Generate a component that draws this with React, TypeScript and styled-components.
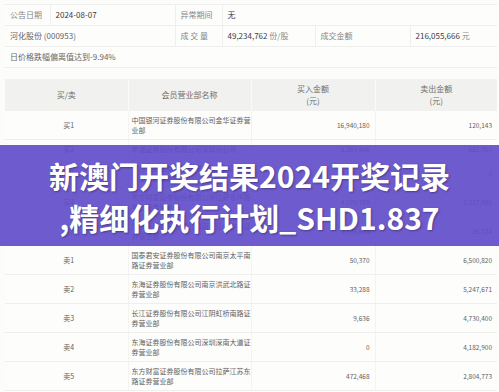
import React from "react";
import styled, { createGlobalStyle } from "styled-components";

const GlobalStyle = createGlobalStyle`
  html, body { margin: 0; padding: 0; background: #fcfcfb; }
  body { font-family: "Noto Sans CJK SC", "Noto Sans", sans-serif; }
`;

const Page = styled.div`
  position: relative;
  width: 499px;
  height: 392px;
  overflow: hidden;
  padding: 4px 2px 0 5px;
  box-sizing: border-box;
  display: flex;
  flex-direction: column;
  gap: 11px;
`;

const InfoTable = styled.table`
  width: 492px;
  table-layout: fixed;
  border-collapse: collapse;
  background: #fdfdfc;
  font-size: 8px;
`;

const InfoCell = styled.td<{ $kind?: "label" | "value" | "muted" }>`
  height: 20px;
  padding: 0 5px;
  border: 1px solid #efefed;
  white-space: nowrap;
  line-height: 10px;
  color: ${(p) => (p.$kind === "value" ? "#3c3c3c" : p.$kind === "muted" ? "#666" : "#858585")};
  &:first-child { border-left: none; }
  &:last-child { border-right: none; }
`;

const Unit = styled.span`
  color: #8a8a8a;
`;

const MainTable = styled.table`
  width: 492px;
  table-layout: fixed;
  border-collapse: collapse;
  background: #fdfdfc;
`;

const HeadCell = styled.th`
  background: #f1f1f0;
  color: #6e6e6e;
  font-weight: 400;
  font-size: 8px;
  line-height: 12px;
  padding: 4px 2px;
  text-align: center;
  border-right: 1px solid #fafafa;
  &:last-child { border-right: none; }
`;

const BodyCell = styled.td<{ $align: "center" | "left" | "right" }>`
  padding: 4px ${(p) => (p.$align === "left" ? "0 4px 3px" : "5px")};
  padding-top: 4px;
  padding-bottom: 4px;
  padding-left: ${(p) => (p.$align === "left" ? "3px" : "5px")};
  padding-right: ${(p) => (p.$align === "right" ? "5px" : "0")};
  text-align: ${(p) => p.$align};
  font-size: ${(p) => (p.$align === "right" ? "6.5px" : "7px")};
  line-height: 10px;
  color: #616161;
  border-bottom: 1px solid #efefed;
  border-right: 1px solid #f3f3f1;
  white-space: nowrap;
  &:last-child { border-right: none; }
`;

const NameLine = styled.div`
  white-space: nowrap;
`;

const Banner = styled.div`
  position: absolute;
  left: 0;
  right: 0;
  top: 145px;
  height: 101px;
  background: rgba(96, 76, 201, 0.91);
  display: flex;
  flex-direction: column;
  align-items: center;
  justify-content: center;
`;

const BannerLine = styled.div`
  color: #ffffff;
  font-family: "Noto Sans CJK SC", "Noto Sans", sans-serif;
  font-weight: 700;
  font-size: 30px;
  line-height: 42px;
  white-space: nowrap;
  text-shadow: 1px 1px 2px rgba(30, 20, 60, 0.45);
`;

type Row = { side: string; name: string[]; buy: string; sell: string };

const rows: Row[] = [
  { side: "买1", name: ["中国银河证券股份有限公司金华证券营", "业部"], buy: "16,940,180", sell: "120,143" },
  { side: "买2", name: ["申港证券股份有限公司深圳分公司"], buy: "5,263,446", sell: "662,703" },
  { side: "买3", name: ["东方财富证券股份有限公司拉萨团结路", "第二证券营业部"], buy: "3,125,546", sell: "0" },
  { side: "买4", name: ["东方财富证券股份有限公司拉萨东环路", "第二证券营业部"], buy: "4,070,789", sell: "1,017,985" },
  { side: "买5", name: ["华泰证券股份有限公司南京江东中路证", "券营业部"], buy: "2,736,624", sell: "26,724" },
  { side: "卖1", name: ["国泰君安证券股份有限公司南京太平南", "路证券营业部"], buy: "50,370", sell: "6,500,820" },
  { side: "卖2", name: ["东海证券股份有限公司南京洪武北路证", "券营业部"], buy: "33,288", sell: "5,247,671" },
  { side: "卖3", name: ["长江证券股份有限公司江阴虹桥南路证", "券营业部"], buy: "9,636", sell: "4,730,400" },
  { side: "卖4", name: ["东海证券股份有限公司深圳深南大道证", "券营业部"], buy: "0", sell: "4,182,900" },
  { side: "卖5", name: ["东方财富证券股份有限公司拉萨江苏东", "路证券营业部"], buy: "472,468", sell: "2,804,773" },
];

export default function App() {
  return (
    <>
      <GlobalStyle />
      <Page>
        <InfoTable>
          <colgroup>
            <col style={{ width: 45 }} />
            <col style={{ width: 125 }} />
            <col style={{ width: 47 }} />
            <col style={{ width: 93 }} />
            <col style={{ width: 95 }} />
            <col style={{ width: 87 }} />
          </colgroup>
          <tbody>
            <tr>
              <InfoCell $kind="label">公告日期</InfoCell>
              <InfoCell $kind="value">2024-08-07</InfoCell>
              <InfoCell $kind="label">异常期间</InfoCell>
              <InfoCell $kind="value" colSpan={3}>无</InfoCell>
            </tr>
            <tr>
              <InfoCell $kind="muted" colSpan={2}>河化股份 (000953)</InfoCell>
              <InfoCell $kind="label">成 交 量</InfoCell>
              <InfoCell $kind="value">
                49,234,762 <Unit>份/股</Unit>
              </InfoCell>
              <InfoCell $kind="label">成交金额</InfoCell>
              <InfoCell $kind="value">
                216,055,666 <Unit>元</Unit>
              </InfoCell>
            </tr>
            <tr>
              <InfoCell $kind="muted" colSpan={6}>日价格跌幅偏离值达到-9.94%</InfoCell>
            </tr>
          </tbody>
        </InfoTable>

        <MainTable>
          <colgroup>
            <col style={{ width: 123 }} />
            <col style={{ width: 123 }} />
            <col style={{ width: 124 }} />
            <col style={{ width: 122 }} />
          </colgroup>
          <thead>
            <tr>
              <HeadCell>买/卖</HeadCell>
              <HeadCell>会员营业部名称</HeadCell>
              <HeadCell>
                买入金额
                <br />
                (元)
              </HeadCell>
              <HeadCell>
                卖出金额
                <br />
                (元)
              </HeadCell>
            </tr>
          </thead>
          <tbody>
            {rows.map((r) => (
              <tr key={r.side}>
                <BodyCell $align="center">{r.side}</BodyCell>
                <BodyCell $align="left">
                  {r.name.map((l) => (
                    <NameLine key={l}>{l}</NameLine>
                  ))}
                </BodyCell>
                <BodyCell $align="right">{r.buy}</BodyCell>
                <BodyCell $align="right">{r.sell}</BodyCell>
              </tr>
            ))}
          </tbody>
        </MainTable>

        <Banner>
          <BannerLine>新澳门开奖结果2024开奖记录</BannerLine>
          <BannerLine>,精细化执行计划_SHD1.837</BannerLine>
        </Banner>
      </Page>
    </>
  );
}
